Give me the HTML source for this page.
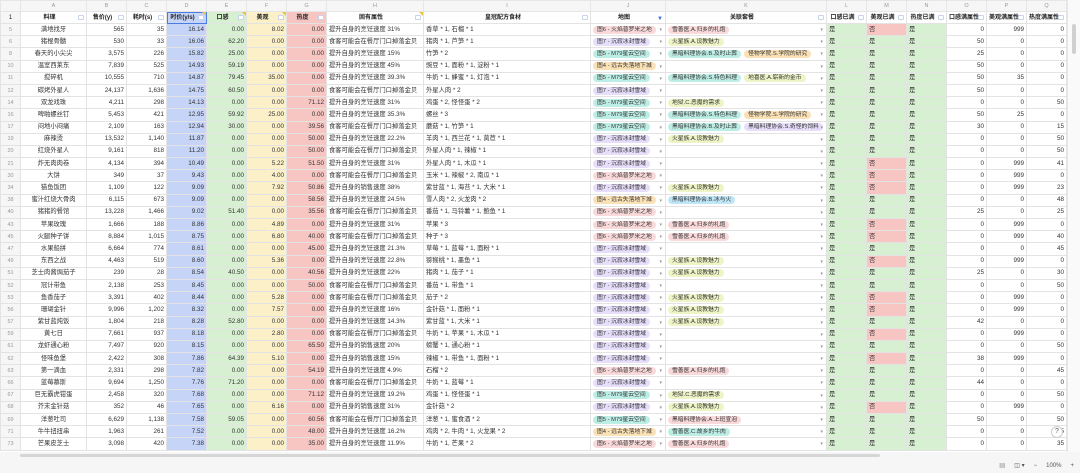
<!DOCTYPE html>
<html><head><meta charset="utf-8">
<style>
*{margin:0;padding:0;box-sizing:border-box}
html,body{width:1080px;height:473px;overflow:hidden;background:#fff;font-family:"Liberation Sans","Noto Sans CJK SC",sans-serif;color:#333}
table{border-collapse:collapse;table-layout:fixed;position:absolute;left:0;top:0;width:1066px}
td{border:1px solid #e3e3e3;height:12.2px;font-size:6.3px;line-height:10px;white-space:nowrap;overflow:hidden;padding:0 2px;position:relative}
tr.cl td{height:10px;background:#f6f6f6;color:#999;text-align:center;font-size:5.5px;border-color:#e6e6e6}
tr.hd td{height:12px;font-weight:600;text-align:center;font-size:6px;color:#222;padding-right:10px;padding-left:2px;overflow:visible}
tr.hd td i{position:absolute;right:2px;top:3px;width:6px;height:5px;border:1px solid #c8d4ec;border-radius:1px;background:#fff}
tr.hd td b.c{position:absolute;right:0;top:0;border-left:4px solid transparent;border-top:4px solid #f0c040}
td.n{background:#f6f6f6;color:#999;text-align:center;font-size:5.5px}
td.a{text-align:center}
td.r{text-align:right}
.D{background:#c5d4f7}.E{background:#d8f0d2}.F{background:#fbf0c8}.G{background:#f7c6c2}
.L{background:#d8f0d2}.X{background:#f7c6c2}
span.t{display:inline-block;padding:0 4px;border-radius:5px;line-height:8px;font-size:5.8px;margin-right:3px;margin-top:1px}
.p{background:#f9d9da}.u{background:#e6defa}.s{background:#bdeee6}.o{background:#fbe1b6}.y{background:#eef4c6}.b{background:#bfe6f7}
td.j,td.k{padding-right:10px}
td.j:after,td.k:after{content:"▾";position:absolute;right:3px;top:1px;color:#999;font-size:5px}
#sb{position:absolute;left:1067px;top:0;width:13px;height:452px;background:#fafafa;border-left:1px solid #e6e6e6}
#sb div{position:absolute;left:4px;top:24px;width:4px;height:30px;background:#d0d0d0;border-radius:2px}
#bot{position:absolute;left:0;top:452px;width:1080px;height:21px;background:#f6f6f6}
#hs{position:absolute;left:20px;top:454px;width:860px;height:3px;background:#d6d6d6;border-radius:2px}
#st{position:absolute;right:6px;top:461px;font-size:6px;color:#555;display:flex;gap:9px;align-items:center}
#help{position:absolute;left:1051px;top:426px;width:12px;height:12px;border-radius:6px;background:#fff;border:1px solid #ccc;font-size:7px;text-align:center;line-height:10px;color:#555}
</style></head><body>
<table>
<colgroup><col style="width:20px"><col style="width:66px"><col style="width:40px"><col style="width:40px"><col style="width:40px"><col style="width:40px"><col style="width:40px"><col style="width:40px"><col style="width:97px"><col style="width:167px"><col style="width:75px"><col style="width:161px"><col style="width:40px"><col style="width:40px"><col style="width:40px"><col style="width:40px"><col style="width:40px"><col style="width:40px"></colgroup>
<tr class="cl"><td></td><td>A</td><td>B</td><td>C</td><td>D</td><td>E</td><td>F</td><td>G</td><td>H</td><td>I</td><td>J</td><td>K</td><td>L</td><td>M</td><td>N</td><td>O</td><td>P</td><td>Q</td></tr>
<tr class="hd"><td class="n" style="font-weight:normal;padding:0">1</td><td>料理<i></i></td><td>售价(y)<i></i></td><td>耗时(s)<i></i></td><td class="D" style="outline:1.5px solid #4a7be0;outline-offset:-1px">时价(y/s)<i></i><b class="c"></b></td><td class="E">口感<i></i><b class="c"></b></td><td class="F">美观<i></i><b class="c"></b></td><td class="G">热度<i></i></td><td>固有属性<i></i><b class="c"></b></td><td>皇冠配方食材<i></i></td><td>地图<i style="border:none;color:#3b6fd8;font-style:normal;font-size:6px;top:2px">▼</i></td><td>关联套餐<i></i></td><td>口感已满<i></i></td><td>美观已满<i></i></td><td>热度已满<i></i></td><td>口感满属性<i></i></td><td>美观满属性<i></i></td><td>热度满属性<i></i></td></tr>
<tr><td class="n">5</td><td class="a">满地找牙</td><td class="r">565</td><td class="r">35</td><td class="r D">16.14</td><td class="r E">0.00</td><td class="r F">8.02</td><td class="r G">0.00</td><td>提升自身的烹饪速度 31%</td><td>香草 * 1, 石榴 * 1</td><td class="j"><span class="t p">图6 - 火焰普罗米之地</span></td><td class="k"><span class="t p">雪善医.A.归乡的礼炮</span></td><td class="L">是</td><td class="X">否</td><td class="L">是</td><td class="r">0</td><td class="r">999</td><td class="r">0</td></tr>
<tr><td class="n">6</td><td class="a">猪棍骨髓</td><td class="r">530</td><td class="r">33</td><td class="r D">16.06</td><td class="r E">62.20</td><td class="r F">0.00</td><td class="r G">0.00</td><td>食客可能会在餐厅门口掉落金贝</td><td>猪肉 * 1, 芦笋 * 1</td><td class="j"><span class="t u">图7 - 沉寂冰封雪域</span></td><td class="k"><span class="t y">火星族.A.设教魅力</span></td><td class="L">是</td><td class="L">是</td><td class="L">是</td><td class="r">50</td><td class="r">0</td><td class="r">0</td></tr>
<tr><td class="n">8</td><td class="a">春天的小尖尖</td><td class="r">3,575</td><td class="r">226</td><td class="r D">15.82</td><td class="r E">25.00</td><td class="r F">0.00</td><td class="r G">0.00</td><td>提升自身的烹饪速度 15%</td><td>竹笋 * 2</td><td class="j"><span class="t s">图5 - M79星云空间</span></td><td class="k"><span class="t s">黑暗料理协会.B.及时止葬</span><span class="t o">怪物学院.S.学院的研究</span></td><td class="L">是</td><td class="L">是</td><td class="L">是</td><td class="r">25</td><td class="r">0</td><td class="r">0</td></tr>
<tr><td class="n">10</td><td class="a">温室西莱东</td><td class="r">7,839</td><td class="r">525</td><td class="r D">14.93</td><td class="r E">59.19</td><td class="r F">0.00</td><td class="r G">0.00</td><td>提升自身的烹饪速度 45%</td><td>豌豆 * 1, 面粉 * 1, 淀粉 * 1</td><td class="j"><span class="t o">图4 - 远古失落地下城</span></td><td class="k"></td><td class="L">是</td><td class="L">是</td><td class="L">是</td><td class="r">50</td><td class="r">0</td><td class="r">0</td></tr>
<tr><td class="n">11</td><td class="a">搅碎机</td><td class="r">10,555</td><td class="r">710</td><td class="r D">14.87</td><td class="r E">79.45</td><td class="r F">35.00</td><td class="r G">0.00</td><td>提升自身的烹饪速度 39.3%</td><td>牛奶 * 1, 蜂蜜 * 1, 灯泡 * 1</td><td class="j"><span class="t s">图5 - M79星云空间</span></td><td class="k"><span class="t s">黑暗料理协会.S.特色料理</span><span class="t y">地喜医.A.崭新的金币</span></td><td class="L">是</td><td class="L">是</td><td class="L">是</td><td class="r">50</td><td class="r">35</td><td class="r">0</td></tr>
<tr><td class="n">12</td><td class="a">碳烤外星人</td><td class="r">24,137</td><td class="r">1,636</td><td class="r D">14.75</td><td class="r E">60.50</td><td class="r F">0.00</td><td class="r G">0.00</td><td>食客可能会在餐厅门口掉落金贝</td><td>外星人肉 * 2</td><td class="j"><span class="t u">图7 - 沉寂冰封雪域</span></td><td class="k"></td><td class="L">是</td><td class="L">是</td><td class="L">是</td><td class="r">50</td><td class="r">0</td><td class="r">0</td></tr>
<tr><td class="n">14</td><td class="a">双龙戏珠</td><td class="r">4,211</td><td class="r">298</td><td class="r D">14.13</td><td class="r E">0.00</td><td class="r F">0.00</td><td class="r G">71.12</td><td>提升自身的烹饪速度 31%</td><td>鸡蛋 * 2, 怪怪蛋 * 2</td><td class="j"><span class="t s">图5 - M79星云空间</span></td><td class="k"><span class="t y">地狱.C.恶魔的需求</span></td><td class="L">是</td><td class="L">是</td><td class="L">是</td><td class="r">0</td><td class="r">0</td><td class="r">50</td></tr>
<tr><td class="n">16</td><td class="a">啤啪螺丝钉</td><td class="r">5,453</td><td class="r">421</td><td class="r D">12.95</td><td class="r E">59.92</td><td class="r F">25.00</td><td class="r G">0.00</td><td>提升自身的烹饪速度 35.3%</td><td>螺丝 * 3</td><td class="j"><span class="t s">图5 - M79星云空间</span></td><td class="k"><span class="t s">黑暗料理协会.S.特色料理</span><span class="t o">怪物学院.S.学院的研究</span></td><td class="L">是</td><td class="L">是</td><td class="L">是</td><td class="r">50</td><td class="r">25</td><td class="r">0</td></tr>
<tr><td class="n">17</td><td class="a">闷地小闷痛</td><td class="r">2,109</td><td class="r">163</td><td class="r D">12.94</td><td class="r E">30.00</td><td class="r F">0.00</td><td class="r G">39.56</td><td>食客可能会在餐厅门口掉落金贝</td><td>蘑菇 * 1, 竹笋 * 1</td><td class="j"><span class="t s">图5 - M79星云空间</span></td><td class="k"><span class="t s">黑暗料理协会.B.及时止葬</span><span class="t u">黑暗料理协会.S.奇怪的饲料</span></td><td class="L">是</td><td class="L">是</td><td class="L">是</td><td class="r">30</td><td class="r">0</td><td class="r">15</td></tr>
<tr><td class="n">19</td><td class="a">麻辣烫</td><td class="r">13,532</td><td class="r">1,140</td><td class="r D">11.87</td><td class="r E">0.00</td><td class="r F">0.00</td><td class="r G">50.00</td><td>提升自身的烹饪速度 22.2%</td><td>羊肉 * 1, 西兰花 * 1, 莴苣 * 1</td><td class="j"><span class="t u">图7 - 沉寂冰封雪域</span></td><td class="k"><span class="t y">火星族.A.设教魅力</span></td><td class="L">是</td><td class="L">是</td><td class="L">是</td><td class="r">0</td><td class="r">0</td><td class="r">50</td></tr>
<tr><td class="n">20</td><td class="a">红烧外星人</td><td class="r">9,161</td><td class="r">818</td><td class="r D">11.20</td><td class="r E">0.00</td><td class="r F">0.00</td><td class="r G">50.00</td><td>食客可能会在餐厅门口掉落金贝</td><td>外星人肉 * 1, 辣椒 * 1</td><td class="j"><span class="t u">图7 - 沉寂冰封雪域</span></td><td class="k"></td><td class="L">是</td><td class="L">是</td><td class="L">是</td><td class="r">0</td><td class="r">0</td><td class="r">50</td></tr>
<tr><td class="n">21</td><td class="a">炸无肉肉卷</td><td class="r">4,134</td><td class="r">394</td><td class="r D">10.49</td><td class="r E">0.00</td><td class="r F">5.22</td><td class="r G">51.50</td><td>提升自身的烹饪速度 31%</td><td>外星人肉 * 1, 木瓜 * 1</td><td class="j"><span class="t u">图7 - 沉寂冰封雪域</span></td><td class="k"></td><td class="L">是</td><td class="X">否</td><td class="L">是</td><td class="r">0</td><td class="r">999</td><td class="r">41</td></tr>
<tr><td class="n">30</td><td class="a">大饼</td><td class="r">349</td><td class="r">37</td><td class="r D">9.43</td><td class="r E">0.00</td><td class="r F">4.00</td><td class="r G">0.00</td><td>食客可能会在餐厅门口掉落金贝</td><td>玉米 * 1, 辣椒 * 2, 南瓜 * 1</td><td class="j"><span class="t p">图6 - 火焰普罗米之地</span></td><td class="k"></td><td class="L">是</td><td class="X">否</td><td class="L">是</td><td class="r">0</td><td class="r">999</td><td class="r">0</td></tr>
<tr><td class="n">34</td><td class="a">猫鱼饭团</td><td class="r">1,109</td><td class="r">122</td><td class="r D">9.09</td><td class="r E">0.00</td><td class="r F">7.92</td><td class="r G">50.86</td><td>提升自身的销售速度 38%</td><td>紫甘蓝 * 1, 海苔 * 1, 大米 * 1</td><td class="j"><span class="t u">图7 - 沉寂冰封雪域</span></td><td class="k"><span class="t y">火星族.A.设教魅力</span></td><td class="L">是</td><td class="X">否</td><td class="L">是</td><td class="r">0</td><td class="r">999</td><td class="r">23</td></tr>
<tr><td class="n">38</td><td class="a">蜜汁红烧大骨肉</td><td class="r">6,115</td><td class="r">673</td><td class="r D">9.09</td><td class="r E">0.00</td><td class="r F">0.00</td><td class="r G">58.56</td><td>提升自身的烹饪速度 24.5%</td><td>雪人肉 * 2, 火龙肉 * 2</td><td class="j"><span class="t o">图4 - 远古失落地下城</span></td><td class="k"><span class="t b">黑暗料理协会.B.冰与火</span></td><td class="L">是</td><td class="L">是</td><td class="L">是</td><td class="r">0</td><td class="r">0</td><td class="r">48</td></tr>
<tr><td class="n">40</td><td class="a">猪猪的餐馆</td><td class="r">13,228</td><td class="r">1,466</td><td class="r D">9.02</td><td class="r E">51.40</td><td class="r F">0.00</td><td class="r G">35.56</td><td>食客可能会在餐厅门口掉落金贝</td><td>番茄 * 1, 马铃薯 * 1, 鲍鱼 * 1</td><td class="j"><span class="t p">图6 - 火焰普罗米之地</span></td><td class="k"></td><td class="L">是</td><td class="L">是</td><td class="L">是</td><td class="r">25</td><td class="r">0</td><td class="r">25</td></tr>
<tr><td class="n">43</td><td class="a">苹果玫瑰</td><td class="r">1,666</td><td class="r">188</td><td class="r D">8.86</td><td class="r E">0.00</td><td class="r F">4.89</td><td class="r G">0.00</td><td>提升自身的烹饪速度 31%</td><td>苹果 * 3</td><td class="j"><span class="t p">图6 - 火焰普罗米之地</span></td><td class="k"><span class="t p">雪善医.A.归乡的礼炮</span></td><td class="L">是</td><td class="X">否</td><td class="L">是</td><td class="r">0</td><td class="r">999</td><td class="r">0</td></tr>
<tr><td class="n">45</td><td class="a">火腿种子饼</td><td class="r">8,884</td><td class="r">1,015</td><td class="r D">8.75</td><td class="r E">0.00</td><td class="r F">6.80</td><td class="r G">40.00</td><td>食客可能会在餐厅门口掉落金贝</td><td>种子 * 3</td><td class="j"><span class="t p">图6 - 火焰普罗米之地</span></td><td class="k"><span class="t p">雪善医.A.归乡的礼炮</span></td><td class="L">是</td><td class="X">否</td><td class="L">是</td><td class="r">0</td><td class="r">999</td><td class="r">40</td></tr>
<tr><td class="n">47</td><td class="a">水果船拼</td><td class="r">6,664</td><td class="r">774</td><td class="r D">8.61</td><td class="r E">0.00</td><td class="r F">0.00</td><td class="r G">45.00</td><td>提升自身的烹饪速度 21.3%</td><td>草莓 * 1, 蓝莓 * 1, 面粉 * 1</td><td class="j"><span class="t u">图7 - 沉寂冰封雪域</span></td><td class="k"></td><td class="L">是</td><td class="L">是</td><td class="L">是</td><td class="r">0</td><td class="r">0</td><td class="r">45</td></tr>
<tr><td class="n">49</td><td class="a">东西之战</td><td class="r">4,463</td><td class="r">519</td><td class="r D">8.60</td><td class="r E">0.00</td><td class="r F">5.36</td><td class="r G">0.00</td><td>提升自身的烹饪速度 22.8%</td><td>猕猴桃 * 1, 墨鱼 * 1</td><td class="j"><span class="t u">图7 - 沉寂冰封雪域</span></td><td class="k"><span class="t y">火星族.A.设教魅力</span></td><td class="L">是</td><td class="X">否</td><td class="L">是</td><td class="r">0</td><td class="r">999</td><td class="r">0</td></tr>
<tr><td class="n">51</td><td class="a">芝士肉酱焗茄子</td><td class="r">239</td><td class="r">28</td><td class="r D">8.54</td><td class="r E">40.50</td><td class="r F">0.00</td><td class="r G">40.56</td><td>提升自身的烹饪速度 22%</td><td>猪肉 * 1, 茄子 * 1</td><td class="j"><span class="t u">图7 - 沉寂冰封雪域</span></td><td class="k"><span class="t y">火星族.A.设教魅力</span></td><td class="L">是</td><td class="L">是</td><td class="L">是</td><td class="r">25</td><td class="r">0</td><td class="r">30</td></tr>
<tr><td class="n">52</td><td class="a">冠计带鱼</td><td class="r">2,138</td><td class="r">253</td><td class="r D">8.45</td><td class="r E">0.00</td><td class="r F">0.00</td><td class="r G">50.00</td><td>食客可能会在餐厅门口掉落金贝</td><td>番茄 * 1, 带鱼 * 1</td><td class="j"><span class="t u">图7 - 沉寂冰封雪域</span></td><td class="k"></td><td class="L">是</td><td class="L">是</td><td class="L">是</td><td class="r">0</td><td class="r">0</td><td class="r">50</td></tr>
<tr><td class="n">53</td><td class="a">鱼香茄子</td><td class="r">3,391</td><td class="r">402</td><td class="r D">8.44</td><td class="r E">0.00</td><td class="r F">5.28</td><td class="r G">0.00</td><td>食客可能会在餐厅门口掉落金贝</td><td>茄子 * 2</td><td class="j"><span class="t u">图7 - 沉寂冰封雪域</span></td><td class="k"><span class="t y">火星族.A.设教魅力</span></td><td class="L">是</td><td class="X">否</td><td class="L">是</td><td class="r">0</td><td class="r">999</td><td class="r">0</td></tr>
<tr><td class="n">56</td><td class="a">珊瑚金针</td><td class="r">9,996</td><td class="r">1,202</td><td class="r D">8.32</td><td class="r E">0.00</td><td class="r F">7.57</td><td class="r G">0.00</td><td>提升自身的烹饪速度 16%</td><td>金针菇 * 1, 面粉 * 1</td><td class="j"><span class="t u">图7 - 沉寂冰封雪域</span></td><td class="k"><span class="t y">火星族.A.设教魅力</span></td><td class="L">是</td><td class="X">否</td><td class="L">是</td><td class="r">0</td><td class="r">999</td><td class="r">0</td></tr>
<tr><td class="n">57</td><td class="a">紫甘蓝炖饭</td><td class="r">1,804</td><td class="r">218</td><td class="r D">8.28</td><td class="r E">52.80</td><td class="r F">0.00</td><td class="r G">0.00</td><td>提升自身的烹饪速度 14.3%</td><td>紫甘蓝 * 1, 大米 * 1</td><td class="j"><span class="t u">图7 - 沉寂冰封雪域</span></td><td class="k"><span class="t y">火星族.A.设教魅力</span></td><td class="L">是</td><td class="L">是</td><td class="L">是</td><td class="r">42</td><td class="r">0</td><td class="r">0</td></tr>
<tr><td class="n">59</td><td class="a">黄七日</td><td class="r">7,661</td><td class="r">937</td><td class="r D">8.18</td><td class="r E">0.00</td><td class="r F">2.80</td><td class="r G">0.00</td><td>食客可能会在餐厅门口掉落金贝</td><td>牛奶 * 1, 苹果 * 1, 木瓜 * 1</td><td class="j"><span class="t u">图7 - 沉寂冰封雪域</span></td><td class="k"></td><td class="L">是</td><td class="X">否</td><td class="L">是</td><td class="r">0</td><td class="r">999</td><td class="r">0</td></tr>
<tr><td class="n">61</td><td class="a">龙虾通心粉</td><td class="r">7,497</td><td class="r">920</td><td class="r D">8.15</td><td class="r E">0.00</td><td class="r F">0.00</td><td class="r G">65.50</td><td>提升自身的销售速度 20%</td><td>螃蟹 * 1, 通心粉 * 1</td><td class="j"><span class="t u">图7 - 沉寂冰封雪域</span></td><td class="k"></td><td class="L">是</td><td class="L">是</td><td class="L">是</td><td class="r">0</td><td class="r">0</td><td class="r">50</td></tr>
<tr><td class="n">62</td><td class="a">怪味鱼堡</td><td class="r">2,422</td><td class="r">308</td><td class="r D">7.86</td><td class="r E">64.39</td><td class="r F">5.10</td><td class="r G">0.00</td><td>提升自身的销售速度 15%</td><td>辣椒 * 1, 带鱼 * 1, 面粉 * 1</td><td class="j"><span class="t u">图7 - 沉寂冰封雪域</span></td><td class="k"></td><td class="L">是</td><td class="X">否</td><td class="L">是</td><td class="r">38</td><td class="r">999</td><td class="r">0</td></tr>
<tr><td class="n">63</td><td class="a">第一滴血</td><td class="r">2,331</td><td class="r">298</td><td class="r D">7.82</td><td class="r E">0.00</td><td class="r F">0.00</td><td class="r G">54.19</td><td>提升自身的烹饪速度 4.9%</td><td>石榴 * 2</td><td class="j"><span class="t p">图6 - 火焰普罗米之地</span></td><td class="k"><span class="t p">雪善医.A.归乡的礼炮</span></td><td class="L">是</td><td class="L">是</td><td class="L">是</td><td class="r">0</td><td class="r">0</td><td class="r">45</td></tr>
<tr><td class="n">66</td><td class="a">蓝莓慕斯</td><td class="r">9,694</td><td class="r">1,250</td><td class="r D">7.76</td><td class="r E">71.20</td><td class="r F">0.00</td><td class="r G">0.00</td><td>食客可能会在餐厅门口掉落金贝</td><td>牛奶 * 1, 蓝莓 * 1</td><td class="j"><span class="t u">图7 - 沉寂冰封雪域</span></td><td class="k"></td><td class="L">是</td><td class="L">是</td><td class="L">是</td><td class="r">44</td><td class="r">0</td><td class="r">0</td></tr>
<tr><td class="n">67</td><td class="a">巨无霸虎钳蛋</td><td class="r">2,458</td><td class="r">320</td><td class="r D">7.68</td><td class="r E">0.00</td><td class="r F">0.00</td><td class="r G">71.12</td><td>提升自身的烹饪速度 19.2%</td><td>鸡蛋 * 1, 怪怪蛋 * 1</td><td class="j"><span class="t s">图5 - M79星云空间</span></td><td class="k"><span class="t y">地狱.C.恶魔的需求</span></td><td class="L">是</td><td class="L">是</td><td class="L">是</td><td class="r">0</td><td class="r">0</td><td class="r">50</td></tr>
<tr><td class="n">68</td><td class="a">芥末金针菇</td><td class="r">352</td><td class="r">46</td><td class="r D">7.65</td><td class="r E">0.00</td><td class="r F">6.16</td><td class="r G">0.00</td><td>提升自身的销售速度 31%</td><td>金针菇 * 2</td><td class="j"><span class="t u">图7 - 沉寂冰封雪域</span></td><td class="k"><span class="t y">火星族.A.设教魅力</span></td><td class="L">是</td><td class="X">否</td><td class="L">是</td><td class="r">0</td><td class="r">999</td><td class="r">0</td></tr>
<tr><td class="n">69</td><td class="a">洋葱吐司</td><td class="r">6,629</td><td class="r">1,138</td><td class="r D">7.58</td><td class="r E">59.05</td><td class="r F">0.00</td><td class="r G">60.56</td><td>食客可能会在餐厅门口掉落金贝</td><td>洋葱 * 1, 蜜食酒 * 2</td><td class="j"><span class="t s">图5 - M79星云空间</span></td><td class="k"><span class="t p">黑暗料理协会.A.上班宣泡</span></td><td class="L">是</td><td class="L">是</td><td class="L">是</td><td class="r">50</td><td class="r">0</td><td class="r">50</td></tr>
<tr><td class="n">71</td><td class="a">牛牛扭扭串</td><td class="r">1,963</td><td class="r">261</td><td class="r D">7.52</td><td class="r E">0.00</td><td class="r F">0.00</td><td class="r G">48.00</td><td>提升自身的烹饪速度 16.2%</td><td>鸡肉 * 2, 牛肉 * 1, 火龙果 * 2</td><td class="j"><span class="t o">图4 - 远古失落地下城</span></td><td class="k"><span class="t s">雪善医.C.故乡的牛肉</span></td><td class="L">是</td><td class="L">是</td><td class="L">是</td><td class="r">0</td><td class="r">0</td><td class="r">5</td></tr>
<tr><td class="n">73</td><td class="a">芒果皮芝士</td><td class="r">3,098</td><td class="r">420</td><td class="r D">7.38</td><td class="r E">0.00</td><td class="r F">0.00</td><td class="r G">35.00</td><td>提升自身的烹饪速度 11.9%</td><td>牛奶 * 1, 芒果 * 2</td><td class="j"><span class="t p">图6 - 火焰普罗米之地</span></td><td class="k"><span class="t p">雪善医.A.归乡的礼炮</span></td><td class="L">是</td><td class="L">是</td><td class="L">是</td><td class="r">0</td><td class="r">0</td><td class="r">35</td></tr>
</table>
<div id="sb"><div></div></div>
<div id="help">?</div>
<div id="bot"></div>
<div id="hs"></div>
<div id="st"><span>▤</span><span>◫ ▾</span><span>−</span><span>100%</span><span>+</span></div>
</body></html>
